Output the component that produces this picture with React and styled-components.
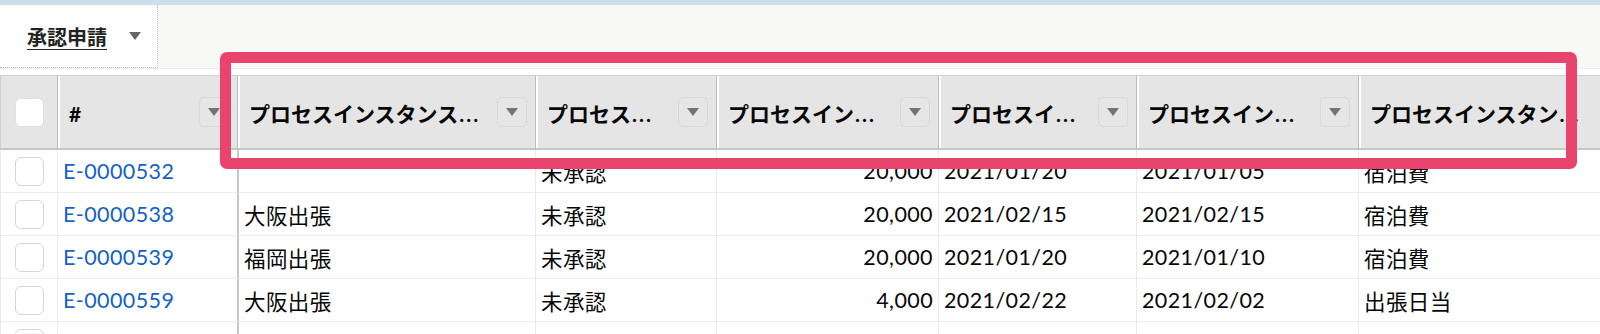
import React from "react";
import styled, { createGlobalStyle } from "styled-components";

const GlobalStyle = createGlobalStyle`
  body {
    margin: 0;
    background: #ffffff;
    font-family: "Lato", "Noto Sans CJK JP", sans-serif;
    color: #080707;
    overflow: hidden;
  }
`;

const Page = styled.div`
  position: relative;
  width: 1600px;
  height: 334px;
  overflow: hidden;
  background: #ffffff;
`;

const TopStripe = styled.div`
  height: 5px;
  background: #c9e0eb;
`;

const TabBar = styled.div`
  display: flex;
  height: 63px;
  background: #f8f8f6;
  border-bottom: 1px solid #ececec;
`;

const Tab = styled.div`
  width: 158px;
  box-sizing: border-box;
  display: flex;
  align-items: center;
  gap: 22px;
  padding-left: 27px;
  background: #ffffff;
  border-right: 1px dotted #b8b8b8;
  border-bottom: 1px dotted #b8b8b8;
`;

const TabLabel = styled.span`
  font-size: 20px;
  font-weight: 700;
  color: #222;
  text-decoration: underline;
  text-underline-offset: 4px;
  text-decoration-thickness: 1px;
`;

const Caret = styled.span`
  width: 0;
  height: 0;
  border-left: 6px solid transparent;
  border-right: 6px solid transparent;
  border-top: 8px solid ${(p) => p.color || "#666"};
`;

const Gap = styled.div`
  height: 6px;
  background: #ffffff;
`;

const Grid = styled.div`
  display: grid;
  grid-template-columns: 57px 180px 298px 181px 222px 198px 222px 300px;
  width: 1658px;
`;

const HeadCell = styled.div`
  height: 75px;
  box-sizing: border-box;
  display: flex;
  align-items: center;
  justify-content: ${(p) => (p.center ? "center" : "space-between")};
  padding: ${(p) => (p.center ? "0" : "0 8px 0 11px")};
  background: #e5e5e5;
  border-top: 1px solid #d2d2d2;
  border-bottom: 2px solid #c6c6c6;
  border-left: ${(p) => (p.first ? "1px solid #cfcfcf" : "1px solid #bcbcbc")};
  box-shadow: ${(p) => (p.first ? "none" : "inset 2px 0 0 #ffffff")};
  font-size: 21px;
  font-weight: 700;
  white-space: nowrap;
  overflow: hidden;
`;

const HeadLabel = styled.span`
  padding-top: 2px;
`;

const Dots = styled.span`
  letter-spacing: 2px;
  margin-left: 1px;
`;

const MenuButton = styled.span`
  flex: none;
  width: 30px;
  height: 30px;
  box-sizing: border-box;
  display: flex;
  align-items: center;
  justify-content: center;
  border: 1px solid #dadada;
  border-radius: 5px;
  background: #e6e6e6;
`;

const Check = styled.span`
  display: block;
  width: 29px;
  height: 29px;
  box-sizing: border-box;
  background: #ffffff;
  border: 1px solid ${(p) => (p.head ? "#e0e0e0" : "#d6d6d6")};
  border-radius: 6px;
`;

const Cell = styled.div`
  height: 43px;
  box-sizing: border-box;
  display: flex;
  align-items: center;
  justify-content: ${(p) =>
    p.center ? "center" : p.right ? "flex-end" : "flex-start"};
  padding: ${(p) => (p.center ? "0" : "0 5px")};
  border-bottom: 1px solid #ebebeb;
  border-left: ${(p) => (p.strong ? "2px solid #c9c9c9" : "1px solid #ebebeb")};
  font-size: 21.5px;
  letter-spacing: 0.4px;
  white-space: nowrap;
  overflow: hidden;
`;

const Link = styled.a`
  color: #1462c4;
  text-decoration: none;
`;

const Highlight = styled.div`
  position: absolute;
  left: 220px;
  top: 52px;
  width: 1357px;
  height: 117px;
  box-sizing: border-box;
  border: 11px solid #e9446d;
  border-radius: 7px;
  pointer-events: none;
`;

const headers = [
  ["#", false],
  ["プロセスインスタンス", true],
  ["プロセス", true],
  ["プロセスイン", true],
  ["プロセスイ", true],
  ["プロセスイン", true],
  ["プロセスインスタン", true],
];

const rows = [
  ["E-0000532", "", "未承認", "20,000", "2021/01/20", "2021/01/05", "宿泊費"],
  ["E-0000538", "大阪出張", "未承認", "20,000", "2021/02/15", "2021/02/15", "宿泊費"],
  ["E-0000539", "福岡出張", "未承認", "20,000", "2021/01/20", "2021/01/10", "宿泊費"],
  ["E-0000559", "大阪出張", "未承認", "4,000", "2021/02/22", "2021/02/02", "出張日当"],
  ["", "", "", "", "", "", ""],
];

function App() {
  return (
    <Page>
      <GlobalStyle />
      <TopStripe />
      <TabBar>
        <Tab>
          <TabLabel>承認申請</TabLabel>
          <Caret />
        </Tab>
      </TabBar>
      <Gap />
      <Grid>
        <HeadCell first center>
          <Check head />
        </HeadCell>
        {headers.map(([label, cut], i) => (
          <HeadCell key={i}>
            <HeadLabel>
              {label}
              {cut && <Dots>...</Dots>}
            </HeadLabel>
            <MenuButton>
              <Caret color="#747474" />
            </MenuButton>
          </HeadCell>
        ))}
        {rows.map((r, ri) => (
          <React.Fragment key={ri}>
            <Cell center>
              <Check />
            </Cell>
            <Cell>
              <Link href="#">{r[0]}</Link>
            </Cell>
            <Cell strong>{r[1]}</Cell>
            <Cell>{r[2]}</Cell>
            <Cell right>{r[3]}</Cell>
            <Cell>{r[4]}</Cell>
            <Cell>{r[5]}</Cell>
            <Cell>{r[6]}</Cell>
          </React.Fragment>
        ))}
      </Grid>
      <Highlight />
    </Page>
  );
}

export default App;
